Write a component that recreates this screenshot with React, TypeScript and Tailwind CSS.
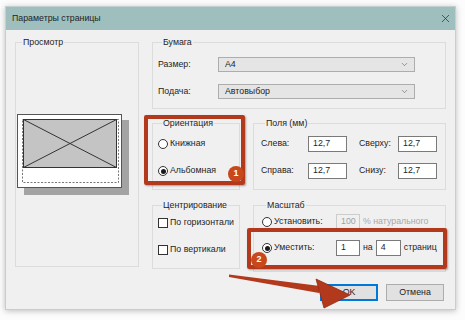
import { X, ChevronDown } from 'lucide-react';

function Radio({ checked }: { checked?: boolean }) {
    return (
        <span className="flex h-[10px] w-[10px] shrink-0 items-center justify-center rounded-full border border-[#333] bg-white">
            {checked && <span className="h-[5px] w-[5px] rounded-full bg-[#1a1a1a]" />}
        </span>
    );
}

function Check() {
    return <span className="h-[10px] w-[10px] shrink-0 border border-[#333] bg-white" />;
}

function Select({ value }: { value: string }) {
    return (
        <div className="flex h-[15px] w-[197px] items-center justify-between border border-[#adadad] bg-[#e5e5e5] pl-[6px] pr-[5px]">
            <span>{value}</span>
            <ChevronDown size={9} strokeWidth={1.5} className="text-[#555]" />
        </div>
    );
}

function Field({ value, w = 'w-[39px]', h = 'h-[16px]', disabled = false }: { value: string; w?: string; h?: string; disabled?: boolean }) {
    return (
        <div
            className={`flex ${w} ${h} items-center border px-[4px] ${
                disabled ? 'border-[#cccccc] bg-[#f0f0f0] text-[#a0a0a0]' : 'border-[#7a7a7a] bg-white'
            }`}
        >
            {value}
        </div>
    );
}

function Group({ title, className, children }: { title: string; className: string; children?: React.ReactNode }) {
    return (
        <fieldset className={`border border-[#dcdcdc] ${className}`}>
            <legend className="ml-[4px] px-[1px] leading-[12px]">{title}</legend>
            {children}
        </fieldset>
    );
}

function Preview() {
    return (
        <svg width="112" height="82" viewBox="0 0 112 82" className="-ml-[1px] mt-[66px]">
            <rect x="7" y="6" width="105" height="75" fill="#a3a3a3" />
            <rect x="0.5" y="0.5" width="104" height="73" fill="#fff" stroke="#555" />
            <rect x="5.5" y="5.5" width="96" height="63" fill="none" stroke="#777" strokeDasharray="2 1.5" />
            <rect x="6.5" y="5.5" width="93" height="48" fill="#c4c4c4" stroke="#333" />
            <line x1="6.5" y1="5.5" x2="99.5" y2="53.5" stroke="#333" />
            <line x1="99.5" y1="5.5" x2="6.5" y2="53.5" stroke="#333" />
        </svg>
    );
}

export default function App() {
    return (
        <div className="relative h-[320px] w-[465px] overflow-hidden bg-[#fcfcfc] pl-[5px] pt-[6px] font-['Liberation_Sans','Arial',sans-serif] text-[8.8px] text-[#1e1e1e]">
            {/* Dialog */}
            <div className="flex h-[304px] w-[451px] flex-col border border-[#c3d0d0] bg-[#f0f0f0] shadow-[0_1px_6px_rgba(0,0,0,0.25)]">
                <header className="flex h-[23px] shrink-0 items-center justify-between bg-[#9fbfbf] pl-[6px] pr-[3px] text-[8.8px]">
                    <span>Параметры страницы</span>
                    <X size={13} strokeWidth={1.4} className="text-[#333]" />
                </header>

                <div className="flex gap-[13px] pl-[9px] pt-[6px]">
                    {/* Preview */}
                    <Group title="Просмотр" className="h-[231px] w-[124px] pl-[2px]">
                        <Preview />
                    </Group>

                    <div className="flex w-[294px] flex-col">
                        <Group title="Бумага" className="h-[73px] px-[5px]">
                            <div className="flex flex-col gap-[12px] pt-[9px]">
                                <div className="flex items-center">
                                    <span className="w-[60px]">Размер:</span>
                                    <Select value="A4" />
                                </div>
                                <div className="flex items-center">
                                    <span className="w-[60px]">Подача:</span>
                                    <Select value="Автовыбор" />
                                </div>
                            </div>
                        </Group>

                        <div className="mt-[8px] flex gap-[13px]">
                            <Group title="Ориентация" className="h-[73px] w-[88px] px-[5px]">
                                <div className="flex flex-col gap-[15px] pt-[9px]">
                                    <label className="flex h-[12px] items-center gap-[2px]">
                                        <Radio />
                                        Книжная
                                    </label>
                                    <label className="flex h-[12px] items-center gap-[2px]">
                                        <Radio checked />
                                        Альбомная
                                    </label>
                                </div>
                            </Group>

                            <Group title="Поля (мм)" className="h-[73px] w-[193px] pl-[7px]">
                                <div className="grid grid-cols-[47px_39px_12px_39px_39px] gap-y-[11px] pt-[7px]">
                                    <span className="self-center">Слева:</span>
                                    <Field value="12,7" />
                                    <span />
                                    <span className="self-center">Сверху:</span>
                                    <Field value="12,7" />
                                    <span className="self-center">Справа:</span>
                                    <Field value="12,7" />
                                    <span />
                                    <span className="self-center">Снизу:</span>
                                    <Field value="12,7" />
                                </div>
                            </Group>
                        </div>

                        <div className="mt-[9px] flex gap-[13px]">
                            <Group title="Центрирование" className="h-[70px] w-[88px] px-[5px]">
                                <div className="flex flex-col gap-[15px] pt-[6px]">
                                    <label className="flex h-[12px] items-center gap-[2px] whitespace-nowrap">
                                        <Check />
                                        По горизонтали
                                    </label>
                                    <label className="flex h-[12px] items-center gap-[2px] whitespace-nowrap">
                                        <Check />
                                        По вертикали
                                    </label>
                                </div>
                            </Group>

                            <Group title="Масштаб" className="h-[73px] w-[193px] pl-[8px]">
                                <div className="flex flex-col gap-[11px] pt-[3px]">
                                    <div className="flex h-[15px] items-center whitespace-nowrap">
                                        <label className="flex w-[74px] items-center gap-[2px]">
                                            <Radio />
                                            Установить:
                                        </label>
                                        <Field value="100" w="w-[24px]" h="h-[15px]" disabled />
                                        <span className="ml-[3px] text-[#a8a8a8]">% натурального</span>
                                    </div>
                                    <div className="flex h-[16px] items-center whitespace-nowrap">
                                        <label className="flex w-[74px] items-center gap-[2px]">
                                            <Radio checked />
                                            Уместить:
                                        </label>
                                        <Field value="1" w="w-[24px]" />
                                        <span className="mx-[3px]">на</span>
                                        <Field value="4" w="w-[25px]" />
                                        <span className="ml-[3px]">страниц</span>
                                    </div>
                                </div>
                            </Group>
                        </div>

                        <div className="mt-[12px] flex justify-end gap-[8px] pr-[2px]">
                            <button className="flex h-[17px] w-[58px] items-center justify-center border-2 border-[#0078d7] bg-[#e1e1e1]">
                                OK
                            </button>
                            <button className="flex h-[17px] w-[58px] items-center justify-center border border-[#adadad] bg-[#e1e1e1]">
                                Отмена
                            </button>
                        </div>
                    </div>
                </div>
            </div>

            {/* Annotations */}
            <div className="absolute left-[144px] top-[115px] h-[70px] w-[101px] rounded-[2px] border-[4px] border-[#b3391c] shadow-[1px_1px_2px_rgba(0,0,0,0.35)]" />
            <div className="absolute left-[247px] top-[228px] h-[41px] w-[200px] rounded-[2px] border-[4px] border-[#b3391c] shadow-[1px_1px_2px_rgba(0,0,0,0.35)]" />
            <div className="absolute left-[228px] top-[166px] flex h-[16px] w-[16px] items-center justify-center rounded-full bg-[#c8481c] text-[9px] font-bold text-white">
                1
            </div>
            <div className="absolute left-[251px] top-[252px] flex h-[16px] w-[16px] items-center justify-center rounded-full bg-[#c8481c] text-[9px] font-bold text-white">
                2
            </div>
            <svg className="pointer-events-none absolute left-0 top-0" width="465" height="320" viewBox="0 0 465 320">
                <polygon points="229,274.5 229,277 319,293 320,286" fill="#b3391c" />
                <polygon points="316,279 324,308 350,295" fill="#b3391c" stroke="#8e2a12" strokeWidth="0.8" strokeLinejoin="round" />
            </svg>
        </div>
    );
}
